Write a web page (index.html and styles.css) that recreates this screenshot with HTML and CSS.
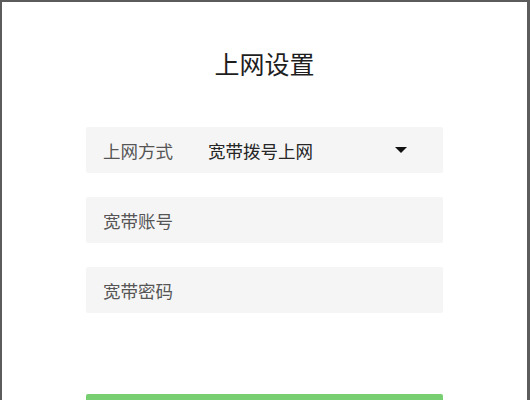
FILE: index.html
```html
<!DOCTYPE html>
<html lang="zh-CN">
<head>
    <meta charset="UTF-8">
    <meta name="viewport" content="width=device-width, initial-scale=1.0">
    <title>上网设置</title>
    <link rel="stylesheet" href="styles.css">
</head>
<body>

    <div class="page">
        <h1 class="title">上网设置</h1>

        <form class="settings-form">
            <div class="field">
                <span class="field-label">上网方式</span>
                <span class="field-value">宽带拨号上网</span>
                <span class="caret"></span>
            </div>

            <div class="field">
                <input type="text" placeholder="宽带账号">
            </div>

            <div class="field">
                <input type="password" placeholder="宽带密码">
            </div>

            <button type="submit" class="save-btn">保存</button>
        </form>
    </div>

</body>
</html>
```

FILE: styles.css
```css
/* Reset */
* {
    margin: 0;
    padding: 0;
    box-sizing: border-box;
}

body {
    font-family: 'Noto Sans CJK SC', 'Noto Sans', sans-serif;
    background-color: #fff;
    overflow: hidden;
}

.page {
    height: 100vh;
    border: solid #5c5c5c;
    border-width: 2px 3px 0 2px;
    display: flex;
    flex-direction: column;
    align-items: center;
}

.title {
    margin-top: 43px;
    font-size: 25px;
    line-height: 36px;
    font-weight: normal;
    color: #1e1e1e;
}

.settings-form {
    width: 357px;
    margin-top: 46px;
    display: flex;
    flex-direction: column;
    gap: 24px;
}

.field {
    height: 46px;
    background-color: #f5f5f5;
    border-radius: 2px;
    display: flex;
    align-items: center;
    padding: 0 17px;
    font-size: 17.5px;
}

.field-label {
    width: 105px;
    color: #555;
}

.field-value {
    flex: 1;
    color: #262626;
}

.caret {
    width: 0;
    height: 0;
    margin-right: 19px;
    border-left: 6px solid transparent;
    border-right: 6px solid transparent;
    border-top: 6px solid #111;
}

.field input {
    width: 100%;
    border: none;
    outline: none;
    background: transparent;
    font-family: inherit;
    font-size: 17.5px;
    color: #262626;
}

.field input::placeholder {
    color: #555;
}

.save-btn {
    margin-top: 57px;
    height: 46px;
    border: none;
    border-radius: 2px;
    background-color: #78cf72;
    color: #fff;
    font-family: inherit;
    font-size: 18px;
    line-height: 18px;
}
```
